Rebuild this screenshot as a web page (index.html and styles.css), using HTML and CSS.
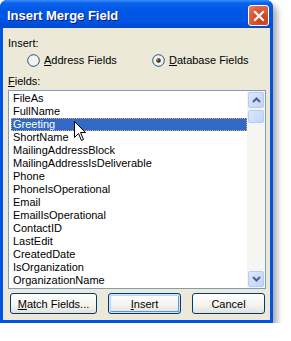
FILE: index.html
```html
<!DOCTYPE html>
<html lang="en">
<head>
    <meta charset="UTF-8">
    <title>Insert Merge Field</title>
    <link rel="stylesheet" href="styles.css">
</head>
<body>
    <div class="window">
        <div class="titlebar">
            <span class="title">Insert Merge Field</span>
            <span class="close">
                <svg width="12" height="12" viewBox="0 0 12 12"><path d="M2 2 L10 10 M10 2 L2 10" stroke="#fff" stroke-width="2.2" stroke-linecap="square"/></svg>
            </span>
        </div>

        <div class="content">
            <div class="label">Insert:</div>

            <div class="radios">
                <label class="radio first">
                    <svg width="13" height="13" viewBox="0 0 13 13"><circle cx="6.5" cy="6.5" r="5.8" fill="#f3f3ee" stroke="#1c5180" stroke-width="1"/></svg>
                    <span><u>A</u>ddress Fields</span>
                </label>
                <label class="radio">
                    <svg width="13" height="13" viewBox="0 0 13 13"><circle cx="6.5" cy="6.5" r="5.8" fill="#f3f3ee" stroke="#1c5180" stroke-width="1"/><circle cx="6.5" cy="6.5" r="2.3" fill="#3b3023"/><circle cx="5.8" cy="5.8" r="0.9" fill="#d89b4c"/></svg>
                    <span><u>D</u>atabase Fields</span>
                </label>
            </div>

            <div class="label fields-label"><u>F</u>ields:</div>

            <div class="listbox">
                <ul class="items">
                    <li>FileAs</li>
                    <li>FullName</li>
                    <li class="selected">Greeting</li>
                    <li>ShortName</li>
                    <li>MailingAddressBlock</li>
                    <li>MailingAddressIsDeliverable</li>
                    <li>Phone</li>
                    <li>PhoneIsOperational</li>
                    <li>Email</li>
                    <li>EmailIsOperational</li>
                    <li>ContactID</li>
                    <li>LastEdit</li>
                    <li>CreatedDate</li>
                    <li>IsOrganization</li>
                    <li>OrganizationName</li>
                </ul>
                <div class="scrollbar">
                    <div class="sb-btn">
                        <svg width="9" height="6" viewBox="0 0 9 6"><path d="M1 5 L4.5 1.5 L8 5" fill="none" stroke="#4d6185" stroke-width="2"/></svg>
                    </div>
                    <div class="sb-thumb"></div>
                    <div class="sb-track"></div>
                    <div class="sb-btn">
                        <svg width="9" height="6" viewBox="0 0 9 6"><path d="M1 1 L4.5 4.5 L8 1" fill="none" stroke="#4d6185" stroke-width="2"/></svg>
                    </div>
                </div>
                <svg class="cursor" width="13" height="21" viewBox="0 0 13 21">
                    <path d="M0.5 0.5 L0.5 16.5 L4.5 12.5 L7.5 19.5 L9.5 18.5 L6.5 11.5 L11.5 11.5 Z" fill="#fff" stroke="#000" stroke-width="1"/>
                </svg>
            </div>

            <div class="buttons">
                <button class="btn match"><u>M</u>atch Fields...</button>
                <button class="btn default"><u>I</u>nsert</button>
                <button class="btn">Cancel</button>
            </div>
        </div>
    </div>
</body>
</html>
```

FILE: styles.css
```css
body {
    margin: 0;
    background-color: #ffffff;
    font-family: "Liberation Sans", Arial, sans-serif;
    font-size: 11px;
    color: #000;
}

.window {
    width: 273px;
    height: 323px;
    display: flex;
    flex-direction: column;
    background-color: #0054e3;
    border-radius: 7px 7px 0 0;
    box-shadow: 4px 5px 6px rgba(0, 0, 0, 0.35);
}

.titlebar {
    height: 28px;
    flex: none;
    display: flex;
    align-items: center;
    justify-content: space-between;
    padding: 0 4px 0 7px;
    border-radius: 7px 7px 0 0;
    background: linear-gradient(#3d8ef8 0, #0a62ee 3px, #0058e6 9px, #0055e3 20px, #0049d4 28px);
}

.title {
    color: #fff;
    font-weight: bold;
    font-size: 13px;
    text-shadow: 1px 1px 0 #0a1e6e;
    margin-top: 2px;
}

.close {
    width: 19px;
    height: 19px;
    margin-top: 3px;
    display: flex;
    align-items: center;
    justify-content: center;
    border: 1px solid #fff;
    border-radius: 3px;
    background: radial-gradient(circle at 70% 75%, #c4391a, #e0643f 70%, #ec8a6b);
}

.content {
    flex: 1;
    margin: 0 3px 3px 3px;
    padding: 9px 4px 0 5px;
    background-color: #ece9d8;
    line-height: 13px;
}

.radios {
    display: flex;
    margin-top: 3px;
    height: 14px;
    align-items: center;
}

.radio {
    display: flex;
    align-items: center;
    gap: 4px;
}

.radio.first {
    margin-left: 19px;
    width: 125px;
}

.fields-label {
    margin-top: 8px;
}

.listbox {
    position: relative;
    margin-top: 2px;
    height: 197px;
    border: 1px solid #7f9db9;
    background-color: #fff;
    display: flex;
}

.items {
    list-style: none;
    margin: 0;
    padding: 1px 0 0 2px;
    flex: 1;
}

.items li {
    height: 13px;
    padding-left: 2px;
    white-space: nowrap;
}

.items li.selected {
    background-color: #316ac5;
    color: #fff;
    outline: 1px dotted #e8a35a;
    outline-offset: -1px;
}

.scrollbar {
    width: 17px;
    flex: none;
    display: flex;
    flex-direction: column;
    background-color: #f5f5f1;
    padding: 1px 1px 1px 0;
}

.sb-btn,
.sb-thumb {
    width: 14px;
    margin-left: 1px;
    border: 1px solid #b7cbf5;
    border-radius: 2px;
    background: linear-gradient(135deg, #dde8fe, #c1d3fb);
}

.sb-btn {
    height: 14px;
    display: flex;
    align-items: center;
    justify-content: center;
}

.sb-thumb {
    height: 11px;
    margin-top: 2px;
}

.sb-track {
    flex: 1;
}

.cursor {
    position: absolute;
    left: 65px;
    top: 30px;
}

.buttons {
    display: flex;
    gap: 11px;
    margin-top: 4px;
    padding-left: 2px;
}

.btn {
    height: 21px;
    width: 73px;
    padding: 0;
    font-family: "Liberation Sans", Arial, sans-serif;
    font-size: 11px;
    color: #000;
    border: 1px solid #003c74;
    border-radius: 3px;
    background: linear-gradient(#ffffff, #f3f3ef 60%, #e3e1d7);
}

.btn.match {
    width: 87px;
}

.btn.default {
    box-shadow: inset 0 0 0 1px #cee7ff, inset 1px 1px 0 1px #bcd4f6, inset -1px -1px 0 1px #6b8ee6;
}
```
